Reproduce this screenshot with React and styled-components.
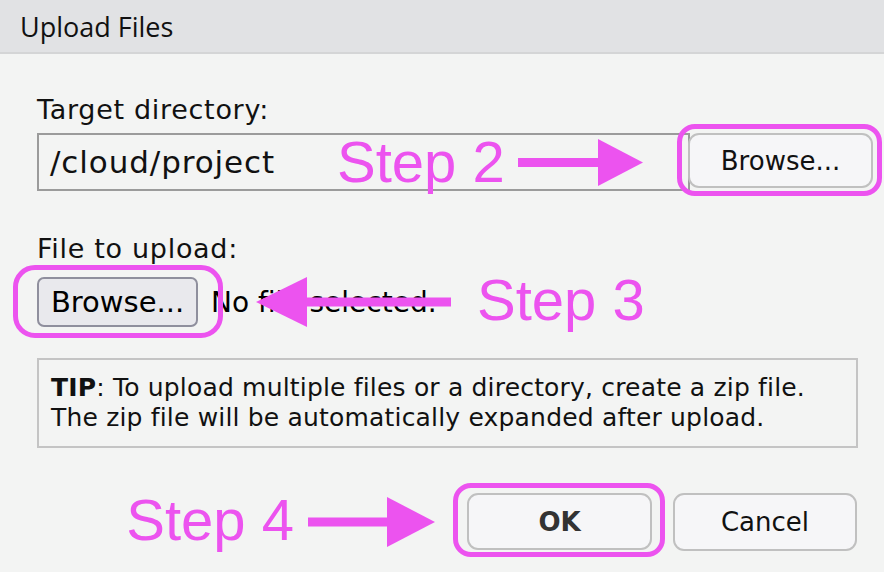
import React from "react";
import styled, { createGlobalStyle } from "styled-components";

const PINK = "#ec53ef";
const UI_FONT = `"DejaVu Sans", Verdana, sans-serif`;

const GlobalStyle = createGlobalStyle`
  html, body {
    margin: 0;
    padding: 0;
    background: #f3f4f3;
  }
  body {
    font-family: ${UI_FONT};
    color: #111;
  }
`;

const Dialog = styled.div`
  width: 884px;
  height: 572px;
  background: #f3f4f3;
  overflow: hidden;
`;

const TitleBar = styled.div`
  height: 52px;
  border-bottom: 2px solid #d4d5d6;
  background: #e1e2e4;
  display: flex;
  align-items: center;
  padding-left: 20px;
  font-family: "Open Sans", sans-serif;
  font-size: 27px;
`;

const Body = styled.div`
  padding-left: 37px;
  display: flex;
  flex-direction: column;
`;

const Label = styled.div`
  font-size: 27px;
  line-height: 30px;
  letter-spacing: 0.7px;
  margin-top: ${(p) => p.$top}px;
`;

const InputRow = styled.div`
  position: relative;
  margin-top: 8px;
  margin-right: 11px;
  height: 58px;
  display: flex;
`;

const PathInput = styled.div`
  flex: 1;
  margin-right: -2px;
  border: 2px solid #9b9b9b;
  display: flex;
  align-items: center;
  padding-left: 11px;
  font-size: 31px;
  letter-spacing: 0.9px;
`;

const Highlight = styled.div`
  position: relative;
  display: flex;
  &::after {
    content: "";
    position: absolute;
    inset: ${(p) => p.$inset};
    border: 5px solid ${PINK};
    border-radius: ${(p) => p.$radius}px;
    pointer-events: none;
  }
`;

const MacButton = styled.button`
  width: ${(p) => p.$width}px;
  height: ${(p) => p.$height}px;
  background: #f6f6f8;
  border: 2px solid #c0c0c0;
  border-radius: 11px;
  font-family: ${UI_FONT};
  font-size: 26px;
  font-weight: ${(p) => (p.$bold ? 700 : 400)};
  color: ${(p) => (p.$bold ? "#333" : "#111")};
  padding: 0;
`;

const FileRow = styled.div`
  position: relative;
  margin-top: 13px;
  height: 50px;
  display: flex;
  align-items: center;
  gap: 13px;
`;

const FileButton = styled.button`
  width: 161px;
  height: 50px;
  background: #e9e9ed;
  border: 2px solid #8f8f9d;
  border-radius: 7px;
  font-family: ${UI_FONT};
  font-size: 29px;
  color: #000;
  padding: 0;
`;

const FileStatus = styled.span`
  font-size: 28px;
  color: #000;
`;

const Annotation = styled.div`
  display: flex;
  align-items: center;
  gap: ${(p) => p.$gap}px;
  ${(p) =>
    p.$overlay &&
    `
    position: absolute;
    top: 0;
    bottom: 0;
    left: ${p.$left}px;
  `}
`;

const StepText = styled.span`
  font-family: "Liberation Sans", Arial, sans-serif;
  font-size: 58px;
  line-height: 58px;
  color: ${PINK};
  margin-top: ${(p) => p.$nudge || 0}px;
`;

const TipBox = styled.div`
  margin-top: 31px;
  width: 821px;
  box-sizing: border-box;
  border: 2px solid #c4c4c4;
  padding: 13px 12px;
  font-size: 25px;
  line-height: 30px;
  letter-spacing: 0.18px;
  b {
    font-weight: 700;
  }
`;

const TipLine = styled.div`
  white-space: nowrap;
`;

const Footer = styled.div`
  margin-top: 45px;
  margin-right: 27px;
  display: flex;
  justify-content: flex-end;
  align-items: center;
`;

const FooterButtons = styled.div`
  display: flex;
  gap: 21px;
  margin-left: 32px;
`;

function Arrow({ length, head, height, left }) {
  const mid = height / 2;
  const shaft = length - head;
  return (
    <svg width={length} height={height} viewBox={`0 0 ${length} ${height}`}>
      {left ? (
        <>
          <rect x={head - 1} y={mid - 4.5} width={shaft + 1} height={9} fill={PINK} />
          <polygon points={`0,${mid} ${head},0 ${head},${height}`} fill={PINK} />
        </>
      ) : (
        <>
          <rect x={0} y={mid - 4.5} width={shaft + 1} height={9} fill={PINK} />
          <polygon points={`${shaft},0 ${length},${mid} ${shaft},${height}`} fill={PINK} />
        </>
      )}
    </svg>
  );
}

export default function App() {
  return (
    <>
      <GlobalStyle />
      <Dialog>
        <TitleBar>Upload Files</TitleBar>
        <Body>
          <Label $top={41}>Target directory:</Label>
          <InputRow>
            <PathInput>/cloud/project</PathInput>
            <Highlight $inset="-9px -9px -5px -11px" $radius={18}>
              <MacButton $width={185} $height={55}>
                Browse...
              </MacButton>
            </Highlight>
            <Annotation $overlay $left={300} $gap={13}>
              <StepText>Step 2</StepText>
              <Arrow length={125} head={45} height={47} />
            </Annotation>
          </InputRow>

          <Label $top={43}>File to upload:</Label>
          <FileRow>
            <Highlight $inset="-12px -25px -11px -24px" $radius={22}>
              <FileButton>Browse...</FileButton>
            </Highlight>
            <FileStatus>No file selected.</FileStatus>
            <Annotation $overlay $left={219} $gap={26}>
              <Arrow length={195} head={51} height={50} left />
              <StepText $nudge={-4}>Step 3</StepText>
            </Annotation>
          </FileRow>

          <TipBox>
            <TipLine>
              <b>TIP</b>: To upload multiple files or a directory, create a zip file.
            </TipLine>
            <TipLine>The zip file will be automatically expanded after upload.</TipLine>
          </TipBox>

          <Footer>
            <Annotation $gap={14}>
              <StepText $nudge={-5}>Step 4</StepText>
              <Arrow length={127} head={48} height={50} />
            </Annotation>
            <FooterButtons>
              <Highlight $inset="-10px -13px -6px -14px" $radius={18}>
                <MacButton $width={185} $height={57} $bold>
                  OK
                </MacButton>
              </Highlight>
              <MacButton $width={184} $height={58}>
                Cancel
              </MacButton>
            </FooterButtons>
          </Footer>
        </Body>
      </Dialog>
    </>
  );
}
